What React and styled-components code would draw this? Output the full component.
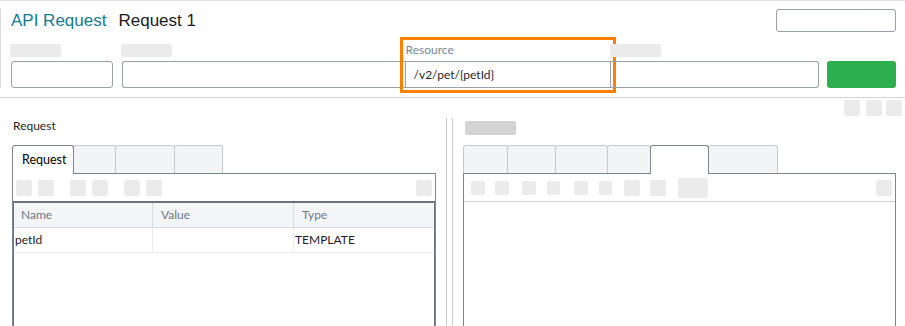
import React from "react";
import styled, { createGlobalStyle } from "styled-components";

const GlobalStyle = createGlobalStyle`
  html, body {
    margin: 0;
    padding: 0;
    overflow: hidden;
    background: #ffffff;
  }
`;

const Page = styled.div`
  width: 905px;
  height: 326px;
  overflow: hidden;
  border-top: 1px solid #dde1e6;
  box-sizing: border-box;
  display: flex;
  flex-direction: column;
  font-family: Lato, "Open Sans", sans-serif;
  font-size: 12px;
  color: #222;
`;

const Header = styled.header`
  padding: 7px 9px 9px 0;
  border-bottom: 1px solid #d2d2d2;
`;

const HeaderBody = styled.div`
  height: 80px;
  border-left: 1px solid #d9d9d9;
  padding-left: 10px;
  display: flex;
  flex-direction: column;
`;

const TitleRow = styled.div`
  height: 34px;
  display: flex;
  justify-content: space-between;
  align-items: flex-start;
`;

const Titles = styled.div`
  display: flex;
  gap: 12px;
  padding-top: 3px;
  font-family: "Liberation Sans", Arial, sans-serif;
  font-size: 17px;
  line-height: 20px;
`;

const TitleKind = styled.span`
  color: #147a92;
`;

const TitleName = styled.span`
  color: #1c1c1c;
`;

const OutlineBox = styled.div`
  margin-top: 1px;
  width: 120px;
  height: 23px;
  box-sizing: border-box;
  border: 1px solid #9aa0a8;
  border-radius: 3px;
`;

const FieldsRow = styled.div`
  display: flex;
  align-items: flex-end;
`;

const FieldColumn = styled.div`
  width: ${(p) => p.$width}px;
  margin-right: ${(p) => p.$gap || 0}px;
  display: flex;
  flex-direction: column;
  gap: 2px;
  outline: ${(p) => (p.$highlight ? "3px solid #ff8000" : "none")};
  outline-offset: 2px;
`;

const LabelArea = styled.div`
  height: 17px;
  display: flex;
  align-items: flex-start;
`;

const LabelStub = styled.div`
  margin: 2px 0 0 -1px;
  width: 51px;
  height: 13px;
  border-radius: 2px;
  background: #ebebeb;
`;

const LabelText = styled.span`
  padding-left: 1px;
  line-height: 15px;
  color: #7b8894;
`;

const Input = styled.div`
  height: 27px;
  box-sizing: border-box;
  border: 1px solid #9ba1a9;
  border-left-width: ${(p) => (p.$noLeft ? 0 : 1)}px;
  border-right-width: ${(p) => (p.$noRight ? 0 : 1)}px;
  border-radius: ${(p) => p.$radius || "3px"};
  padding: 0 8px;
  display: flex;
  align-items: center;
  color: #2b2430;
`;

const RunButton = styled.div`
  width: 69px;
  height: 27px;
  border-radius: 3px;
  background: #2caf4c;
`;

const Workspace = styled.main`
  flex: 1;
  display: flex;
  flex-direction: column;
  min-height: 0;
`;

const WindowTools = styled.div`
  height: 20px;
  box-sizing: border-box;
  padding: 2px 3px 0 0;
  display: flex;
  justify-content: flex-end;
  gap: 4px;
`;

const Stub = styled.div`
  flex: none;
  width: ${(p) => p.$w || 16}px;
  height: ${(p) => p.$h || 16}px;
  margin-left: ${(p) => p.$ml || 0}px;
  border-radius: 2px;
  background: ${(p) => p.$bg || "#ebebeb"};
`;

const HeadingStub = styled(Stub)`
  margin: 3px 0 0 2px;
`;

const Split = styled.div`
  flex: 1;
  display: flex;
  min-height: 0;
`;

const Pane = styled.section`
  width: ${(p) => p.$width}px;
  box-sizing: border-box;
  padding-left: ${(p) => p.$padLeft}px;
  padding-right: ${(p) => p.$padRight || 0}px;
  display: flex;
  flex-direction: column;
`;

const Splitter = styled.div`
  width: 7px;
  box-sizing: border-box;
  border-left: 1px solid #cbcbcb;
  border-right: 1px solid #cbcbcb;
`;

const PaneHeader = styled.div`
  height: 27px;
  display: flex;
  align-items: flex-start;
`;

const PaneTitle = styled.span`
  padding-left: 1px;
  line-height: 16px;
  color: #1f1f1f;
`;

const TabBar = styled.div`
  display: flex;
  height: 28px;
`;

const Tab = styled.div`
  position: relative;
  z-index: ${(p) => (p.$active ? 2 : 1)};
  width: ${(p) => p.$w}px;
  height: ${(p) => (p.$active ? 29 : 28)}px;
  margin-left: ${(p) => (p.$first ? 0 : -1)}px;
  box-sizing: border-box;
  border: 1px solid ${(p) => (p.$active ? "#7b8695" : "#c9c9c9")};
  border-bottom: none;
  border-radius: 3px 3px 0 0;
  background: ${(p) => (p.$active ? "#ffffff" : "#f3f4f6")};
  padding-left: 9px;
  line-height: 27px;
  font-size: 12.5px;
  color: #000;
`;

const Panel = styled.div`
  flex: 1;
  border: 1px solid #7b8695;
  border-bottom: none;
  display: flex;
  flex-direction: column;
`;

const Toolbar = styled.div`
  flex: none;
  box-sizing: border-box;
  padding: 0 3px 0 ${(p) => p.$padLeft}px;
  display: flex;
  align-items: center;
  border-bottom: ${(p) => (p.$divider ? "1px solid #d0d0d0" : "none")};
  height: ${(p) => (p.$divider ? 28 : 27)}px;
`;

const ToolEnd = styled.div`
  margin-left: auto;
`;

const Table = styled.div`
  flex: 1;
  border: 1px solid #6c737c;
  border-top-width: 2px;
  border-bottom: none;
  display: grid;
  grid-template-columns: 139px 141px 1fr;
  grid-auto-rows: 25px;
  align-content: start;
`;

const HeadCell = styled.div`
  box-sizing: border-box;
  height: 25px;
  line-height: 24px;
  padding-left: ${(p) => p.$pad}px;
  background: #f4f5f7;
  border-bottom: 1px solid #d9dcdf;
  border-right: ${(p) => (p.$last ? "none" : "1px solid #d9dcdf")};
  color: #6e7883;
`;

const Cell = styled.div`
  box-sizing: border-box;
  height: 25px;
  line-height: 24px;
  padding-left: ${(p) => p.$pad}px;
  border-bottom: 1px solid #ededed;
  border-right: ${(p) => (p.$last ? "none" : "1px solid #ededed")};
  color: #241c2a;
`;

const leftTabs = [
  { w: 62, label: "Request", active: true },
  { w: 43 },
  { w: 60 },
  { w: 49 },
];

const rightTabs = [
  { w: 45 },
  { w: 49 },
  { w: 53 },
  { w: 44 },
  { w: 59, active: true },
  { w: 70 },
];

const leftTools = [
  { ml: 0 },
  { ml: 6 },
  { ml: 16 },
  { ml: 6 },
  { ml: 16 },
  { ml: 6 },
];

const rightTools = [
  { w: 14, h: 14, ml: 0 },
  { w: 14, h: 14, ml: 10 },
  { w: 14, h: 14, ml: 13 },
  { w: 13, h: 14, ml: 11 },
  { w: 14, h: 14, ml: 14 },
  { w: 13, h: 14, ml: 11 },
  { w: 16, h: 16, ml: 12 },
  { w: 16, h: 16, ml: 10 },
  { w: 30, h: 20, ml: 12 },
];

function Tabs({ tabs }) {
  return (
    <TabBar>
      {tabs.map((t, i) => (
        <Tab key={i} $w={t.w} $active={t.active} $first={i === 0}>
          {t.label}
        </Tab>
      ))}
    </TabBar>
  );
}

export default function App() {
  return (
    <>
      <GlobalStyle />
      <Page>
        <Header>
          <HeaderBody>
            <TitleRow>
              <Titles>
                <TitleKind>API Request</TitleKind>
                <TitleName>Request 1</TitleName>
              </Titles>
              <OutlineBox />
            </TitleRow>
            <FieldsRow>
              <FieldColumn $width={102} $gap={9}>
                <LabelArea>
                  <LabelStub />
                </LabelArea>
                <Input />
              </FieldColumn>
              <FieldColumn $width={283}>
                <LabelArea>
                  <LabelStub />
                </LabelArea>
                <Input $noRight $radius="3px 0 0 3px" />
              </FieldColumn>
              <FieldColumn $width={207} $highlight>
                <LabelArea>
                  <LabelText>Resource</LabelText>
                </LabelArea>
                <Input $radius="0">/v2/pet/{"{petId}"}</Input>
              </FieldColumn>
              <FieldColumn $width={208} $gap={8}>
                <LabelArea>
                  <LabelStub />
                </LabelArea>
                <Input $noLeft $radius="0 3px 3px 0" />
              </FieldColumn>
              <RunButton />
            </FieldsRow>
          </HeaderBody>
        </Header>

        <Workspace>
          <WindowTools>
            <Stub />
            <Stub $ml={2} />
            <Stub />
          </WindowTools>
          <Split>
            <Pane $width={446} $padLeft={12} $padRight={10}>
              <PaneHeader>
                <PaneTitle>Request</PaneTitle>
              </PaneHeader>
              <Tabs tabs={leftTabs} />
              <Panel>
                <Toolbar $padLeft={3}>
                  {leftTools.map((t, i) => (
                    <Stub key={i} $ml={t.ml} />
                  ))}
                  <ToolEnd>
                    <Stub />
                  </ToolEnd>
                </Toolbar>
                <Table>
                  <HeadCell $pad={7}>Name</HeadCell>
                  <HeadCell $pad={8}>Value</HeadCell>
                  <HeadCell $pad={8} $last>
                    Type
                  </HeadCell>
                  <Cell $pad={1}>petId</Cell>
                  <Cell $pad={1} />
                  <Cell $pad={1} $last>
                    TEMPLATE
                  </Cell>
                </Table>
              </Panel>
            </Pane>
            <Splitter />
            <Pane $width={452} $padLeft={10} $padRight={9}>
              <PaneHeader>
                <HeadingStub $w={51} $h={14} $bg="#d4d4d4" />
              </PaneHeader>
              <Tabs tabs={rightTabs} />
              <Panel>
                <Toolbar $padLeft={7} $divider>
                  {rightTools.map((t, i) => (
                    <Stub key={i} $w={t.w} $h={t.h} $ml={t.ml} />
                  ))}
                  <ToolEnd>
                    <Stub />
                  </ToolEnd>
                </Toolbar>
              </Panel>
            </Pane>
          </Split>
        </Workspace>
      </Page>
    </>
  );
}
